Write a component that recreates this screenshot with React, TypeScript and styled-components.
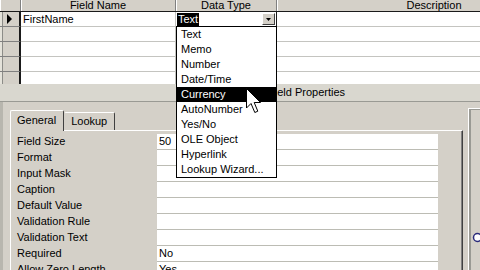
import React from "react";
import styled, { createGlobalStyle } from "styled-components";

const GlobalStyle = createGlobalStyle`
  html, body { margin: 0; padding: 0; background: #d4d0c8; overflow: hidden; }
  body { font-family: "Liberation Sans", Arial, sans-serif; font-size: 11px; color: #000; }
`;

const COLS = "21px 155px 101px 315px";

const Screen = styled.div`
  position: relative;
  width: 480px;
  height: 270px;
  overflow: hidden;
  display: flex;
  flex-direction: column;
  background: #d4d0c8;
`;

const DesignGrid = styled.div`
  flex: 0 0 84px;
  height: 84px;
  overflow: hidden;
  background: #fff;
  display: flex;
  flex-direction: column;
`;

const HeaderLine = styled.div`
  flex: 0 0 12px;
  display: grid;
  grid-template-columns: ${COLS};
  background: #d4d0c8;
  border-bottom: 1px solid #1a1a1a;
  box-sizing: border-box;
`;

const HeaderCell = styled.div`
  text-align: center;
  line-height: 10px;
  white-space: nowrap;
  overflow: hidden;
  border-right: 1px solid #808080;
  box-shadow: inset 1px 0 #ffffff;
`;

const GridLine = styled.div`
  flex: 0 0 15px;
  display: grid;
  grid-template-columns: ${COLS};
`;

const Selector = styled.div`
  display: flex;
  align-items: center;
  justify-content: center;
  background: #d4d0c8;
  border-right: 2px solid #1a1a1a;
  border-bottom: 1px solid #808080;
  box-shadow: inset 2px 0 #e4e2da, inset 3px 0 #8c8c88;
  box-sizing: border-box;
`;

const Cell = styled.div`
  display: flex;
  align-items: center;
  padding-left: 2px;
  line-height: 14px;
  white-space: nowrap;
  overflow: hidden;
  border-bottom: 1px solid #c4c4c0;
  border-right: 1px solid #c4c4c0;
  box-sizing: border-box;
`;

const TypeCell = styled(Cell)`
  padding-left: 1px;
  border-right: 1px solid #1a1a1a;
  justify-content: space-between;
`;

const Selected = styled.span`
  background: #000;
  color: #fff;
  padding: 0 1px;
  line-height: 13px;
`;

const DropButton = styled.div`
  width: 13px;
  height: 12px;
  margin-right: 1px;
  background: #d4d0c8;
  border-top: 1px solid #fff;
  border-left: 1px solid #fff;
  border-right: 1px solid #404040;
  border-bottom: 1px solid #404040;
  box-sizing: border-box;
  display: flex;
  align-items: center;
  justify-content: center;
`;

const PaneHeader = styled.div`
  flex: 0 0 18px;
  box-sizing: border-box;
  padding-left: 268px;
  line-height: 17px;
  background: #d9d7cf;
  border-bottom: 1px solid #9a9a94;
  white-space: nowrap;
`;

const LowerPane = styled.div`
  flex: 1;
  display: flex;
  box-shadow: inset 3px 0 #b8b6ae;
`;

const PropertySheet = styled.div`
  flex: 0 0 463px;
  box-sizing: border-box;
  padding: 8px 0 0 10px;
  display: flex;
  flex-direction: column;
`;

const TabStrip = styled.div`
  display: flex;
  align-items: flex-end;
  height: 20px;
  position: relative;
  z-index: 1;
`;

const Tab = styled.div<{ $active?: boolean }>`
  height: ${(p) => (p.$active ? 21 : 18)}px;
  box-sizing: border-box;
  padding: 0 ${(p) => (p.$active ? 7 : 7)}px 0 6px;
  line-height: ${(p) => (p.$active ? 19 : 17)}px;
  background: #d4d0c8;
  border-top: 1px solid #fff;
  border-left: 1px solid ${(p) => (p.$active ? "#fff" : "transparent")};
  border-right: 1px solid #404040;
  margin-bottom: ${(p) => (p.$active ? -1 : 0)}px;
  border-radius: 2px 2px 0 0;
  white-space: nowrap;
`;

const TabPage = styled.div`
  flex: 1;
  box-sizing: border-box;
  border-top: 1px solid #fff;
  border-left: 1px solid #fff;
  border-right: 1px solid #404040;
  box-shadow: inset -1px 0 #808080;
  padding-top: 3px;
`;

const PropRow = styled.div`
  display: grid;
  grid-template-columns: 146px 281px;
  height: 16px;
`;

const PropLabel = styled.div`
  padding-left: 6px;
  line-height: 15px;
  white-space: nowrap;
`;

const PropValue = styled.div`
  background: #fff;
  border-bottom: 1px solid #bcbcb4;
  padding-left: 2px;
  line-height: 15px;
  white-space: nowrap;
`;

const HelpPane = styled.div`
  flex: 1;
  margin: 6px 0 0 5px;
  border-top: 1px solid #fff;
  border-left: 1px solid #fff;
  box-shadow: inset 2px 1px #9a9a94;
  padding: 123px 0 0 3px;
`;

const DropList = styled.div`
  position: absolute;
  left: 176px;
  top: 26px;
  width: 101px;
  height: 152px;
  box-sizing: border-box;
  background: #fff;
  border: 1px solid #000;
  display: flex;
  flex-direction: column;
`;

const DropItem = styled.div<{ $selected?: boolean }>`
  flex: 0 0 15px;
  line-height: 15px;
  padding-left: 4px;
  white-space: nowrap;
  background: ${(p) => (p.$selected ? "#000" : "transparent")};
  color: ${(p) => (p.$selected ? "#fff" : "#000")};
`;

const Cursor = styled.svg`
  position: absolute;
  left: 246px;
  top: 88px;
`;

const types = [
  "Text",
  "Memo",
  "Number",
  "Date/Time",
  "Currency",
  "AutoNumber",
  "Yes/No",
  "OLE Object",
  "Hyperlink",
  "Lookup Wizard...",
];

const props: [string, string][] = [
  ["Field Size", "50"],
  ["Format", ""],
  ["Input Mask", ""],
  ["Caption", ""],
  ["Default Value", ""],
  ["Validation Rule", ""],
  ["Validation Text", ""],
  ["Required", "No"],
  ["Allow Zero Length", "Yes"],
];

export default function App() {
  return (
    <>
      <GlobalStyle />
      <Screen>
        <DesignGrid>
          <HeaderLine>
            <HeaderCell />
            <HeaderCell>Field Name</HeaderCell>
            <HeaderCell>Data Type</HeaderCell>
            <HeaderCell>Description</HeaderCell>
          </HeaderLine>
          <GridLine>
            <Selector>
              <svg width="7" height="10" viewBox="0 0 7 10">
                <path d="M1 0 L6 5 L1 10 Z" fill="#000" />
              </svg>
            </Selector>
            <Cell>FirstName</Cell>
            <TypeCell>
              <Selected>Text</Selected>
              <DropButton>
                <svg width="5" height="3" viewBox="0 0 5 3">
                  <path d="M0 0 H5 L2.5 3 Z" fill="#000" />
                </svg>
              </DropButton>
            </TypeCell>
            <Cell />
          </GridLine>
          {[0, 1, 2, 3].map((i) => (
            <GridLine key={i}>
              <Selector />
              <Cell />
              <Cell />
              <Cell />
            </GridLine>
          ))}
        </DesignGrid>
        <PaneHeader>Field Properties</PaneHeader>
        <LowerPane>
          <PropertySheet>
            <TabStrip>
              <Tab $active>General</Tab>
              <Tab>Lookup</Tab>
            </TabStrip>
            <TabPage>
              {props.map(([label, value]) => (
                <PropRow key={label}>
                  <PropLabel>{label}</PropLabel>
                  <PropValue>{value}</PropValue>
                </PropRow>
              ))}
            </TabPage>
          </PropertySheet>
          <HelpPane>
            <svg width="10" height="11" viewBox="0 0 10 11">
              <circle cx="5.5" cy="5.5" r="4" fill="#fff" stroke="#2a2a7a" strokeWidth="1.5" />
            </svg>
          </HelpPane>
        </LowerPane>
        <DropList>
          {types.map((t) => (
            <DropItem key={t} $selected={t === "Currency"}>
              {t}
            </DropItem>
          ))}
        </DropList>
        <Cursor width="17" height="28" viewBox="0 0 17 28">
          <path
            d="M0.5 0.5 L0.5 20 L5 15.5 L8.8 24.5 L11.8 23.2 L8.2 14.5 L14.5 14.5 Z"
            fill="#fff"
            stroke="#000"
            strokeWidth="1"
          />
        </Cursor>
      </Screen>
    </>
  );
}
